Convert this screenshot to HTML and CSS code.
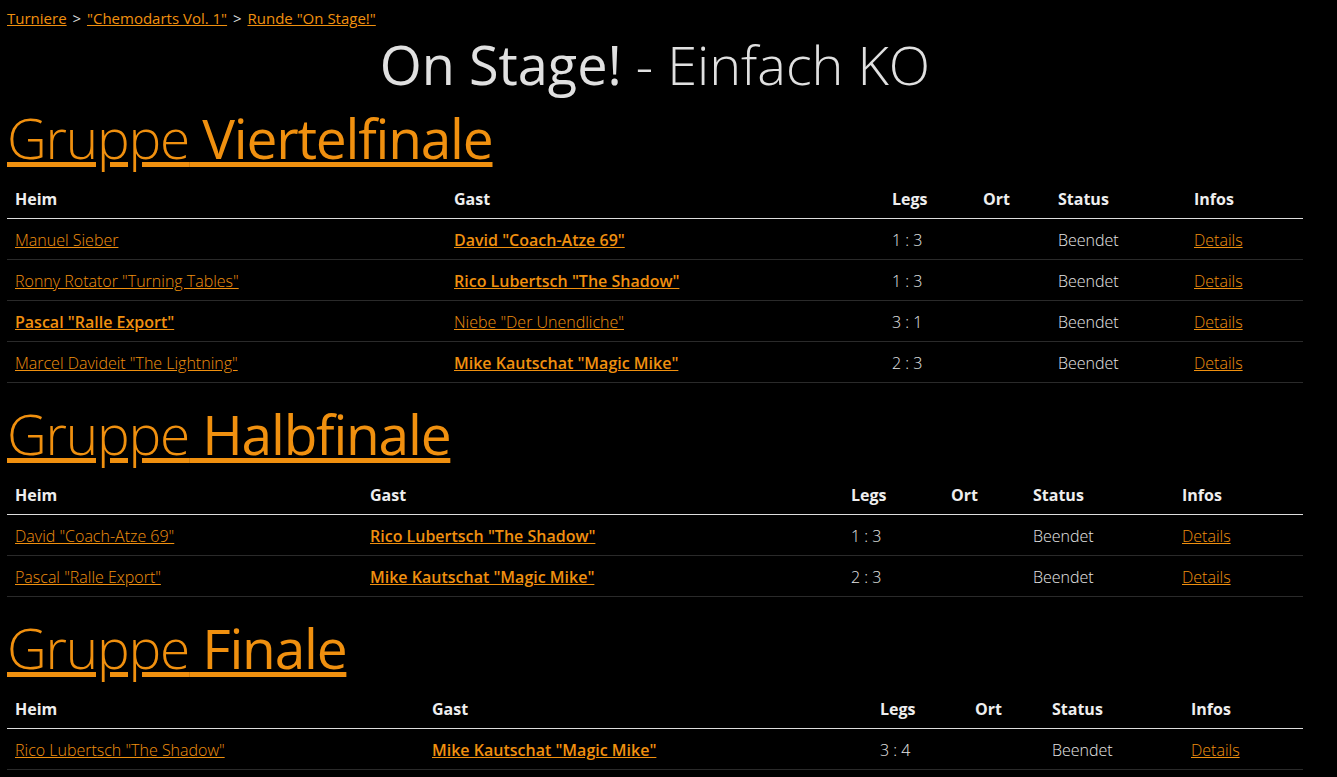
FILE: index.html
```html
<!DOCTYPE html>
<html lang="de">
<head>
<meta charset="utf-8">
<title>On Stage! - Einfach KO</title>
<link rel="stylesheet" href="styles.css">
</head>
<body>
<div class="page">
  <nav class="crumbs">
    <a href="#">Turniere</a> <span class="sep">&gt;</span> <a href="#">"Chemodarts Vol. 1"</a> <span class="sep">&gt;</span> <a href="#">Runde "On Stage!"</a>
  </nav>
  <h1 class="title">On Stage! <span class="light">- Einfach KO</span></h1>

  <section class="group">
    <h2 class="group-title"><a href="#"><span class="light">Gruppe</span> Viertelfinale</a></h2>
    <table class="matches t1">
      <colgroup><col class="c1"><col class="c2"><col class="c3"><col class="c4"><col class="c5"><col class="c6"></colgroup>
      <thead><tr><th>Heim</th><th>Gast</th><th>Legs</th><th>Ort</th><th>Status</th><th>Infos</th></tr></thead>
      <tbody>
        <tr><td><a href="#">Manuel Sieber</a></td><td><a class="win" href="#">David "Coach-Atze 69"</a></td><td>1 : 3</td><td></td><td>Beendet</td><td><a href="#">Details</a></td></tr>
        <tr><td><a href="#">Ronny Rotator "Turning Tables"</a></td><td><a class="win" href="#">Rico Lubertsch "The Shadow"</a></td><td>1 : 3</td><td></td><td>Beendet</td><td><a href="#">Details</a></td></tr>
        <tr><td><a class="win" href="#">Pascal "Ralle Export"</a></td><td><a href="#">Niebe "Der Unendliche"</a></td><td>3 : 1</td><td></td><td>Beendet</td><td><a href="#">Details</a></td></tr>
        <tr><td><a href="#">Marcel Davideit "The Lightning"</a></td><td><a class="win" href="#">Mike Kautschat "Magic Mike"</a></td><td>2 : 3</td><td></td><td>Beendet</td><td><a href="#">Details</a></td></tr>
      </tbody>
    </table>
  </section>

  <section class="group">
    <h2 class="group-title"><a href="#"><span class="light">Gruppe</span> Halbfinale</a></h2>
    <table class="matches t2">
      <colgroup><col class="c1"><col class="c2"><col class="c3"><col class="c4"><col class="c5"><col class="c6"></colgroup>
      <thead><tr><th>Heim</th><th>Gast</th><th>Legs</th><th>Ort</th><th>Status</th><th>Infos</th></tr></thead>
      <tbody>
        <tr><td><a href="#">David "Coach-Atze 69"</a></td><td><a class="win" href="#">Rico Lubertsch "The Shadow"</a></td><td>1 : 3</td><td></td><td>Beendet</td><td><a href="#">Details</a></td></tr>
        <tr><td><a href="#">Pascal "Ralle Export"</a></td><td><a class="win" href="#">Mike Kautschat "Magic Mike"</a></td><td>2 : 3</td><td></td><td>Beendet</td><td><a href="#">Details</a></td></tr>
      </tbody>
    </table>
  </section>

  <section class="group">
    <h2 class="group-title"><a href="#"><span class="light">Gruppe</span> Finale</a></h2>
    <table class="matches t3">
      <colgroup><col class="c1"><col class="c2"><col class="c3"><col class="c4"><col class="c5"><col class="c6"></colgroup>
      <thead><tr><th>Heim</th><th>Gast</th><th>Legs</th><th>Ort</th><th>Status</th><th>Infos</th></tr></thead>
      <tbody>
        <tr><td><a href="#">Rico Lubertsch "The Shadow"</a></td><td><a class="win" href="#">Mike Kautschat "Magic Mike"</a></td><td>3 : 4</td><td></td><td>Beendet</td><td><a href="#">Details</a></td></tr>
      </tbody>
    </table>
  </section>
</div>
</body>
</html>
```
FILE: styles.css
```css
html, body {
  margin: 0;
  padding: 0;
  background: #000;
}
body {
  font-family: "Open Sans", "Noto Sans", "Liberation Sans", sans-serif;
  color: #e6e6e6;
  overflow: hidden;
}
a {
  color: #f0900f;
}
.page {
  width: 1296px;
  margin-left: 7px;
}
.crumbs {
  padding-top: 8px;
  font-size: 15px;
  line-height: 20px;
  font-weight: 400;
}
.crumbs .sep {
  color: #ddd;
  margin: 0 2px;
}
.title {
  margin: 4px 0 9px;
  text-align: center;
  font-size: 54px;
  line-height: 64px;
  font-weight: 400;
  color: #e0e0e0;
}
.light {
  font-weight: 300;
}
.group-title {
  margin: 0;
  font-size: 55px;
  line-height: 66px;
  font-weight: 400;
  letter-spacing: -1.2px;
}
.group + .group .group-title {
  margin-top: 18px;
}
.matches {
  width: 1296px;
  border-collapse: collapse;
  table-layout: fixed;
  font-size: 16px;
  line-height: 24px;
  margin-top: 4px;
}
.matches th {
  text-align: left;
  font-weight: 700;
  color: #eee;
  padding: 12px 8px 7px;
  border-bottom: 1px solid #ddd;
}
.matches td {
  padding: 9px 8px 7px;
  border-bottom: 1px solid #2a2a2a;
  font-weight: 300;
  white-space: nowrap;
}
.matches a.win {
  font-weight: 600;
}
.t1 .c1 { width: 439px; }
.t1 .c2 { width: 438px; }
.t1 .c3 { width: 91px; }
.t1 .c4 { width: 75px; }
.t1 .c5 { width: 136px; }
.t1 .c6 { width: 117px; }
.t2 .c1 { width: 355px; }
.t2 .c2 { width: 481px; }
.t2 .c3 { width: 100px; }
.t2 .c4 { width: 82px; }
.t2 .c5 { width: 149px; }
.t2 .c6 { width: 129px; }
.t3 .c1 { width: 417px; }
.t3 .c2 { width: 448px; }
.t3 .c3 { width: 95px; }
.t3 .c4 { width: 77px; }
.t3 .c5 { width: 139px; }
.t3 .c6 { width: 120px; }
```
